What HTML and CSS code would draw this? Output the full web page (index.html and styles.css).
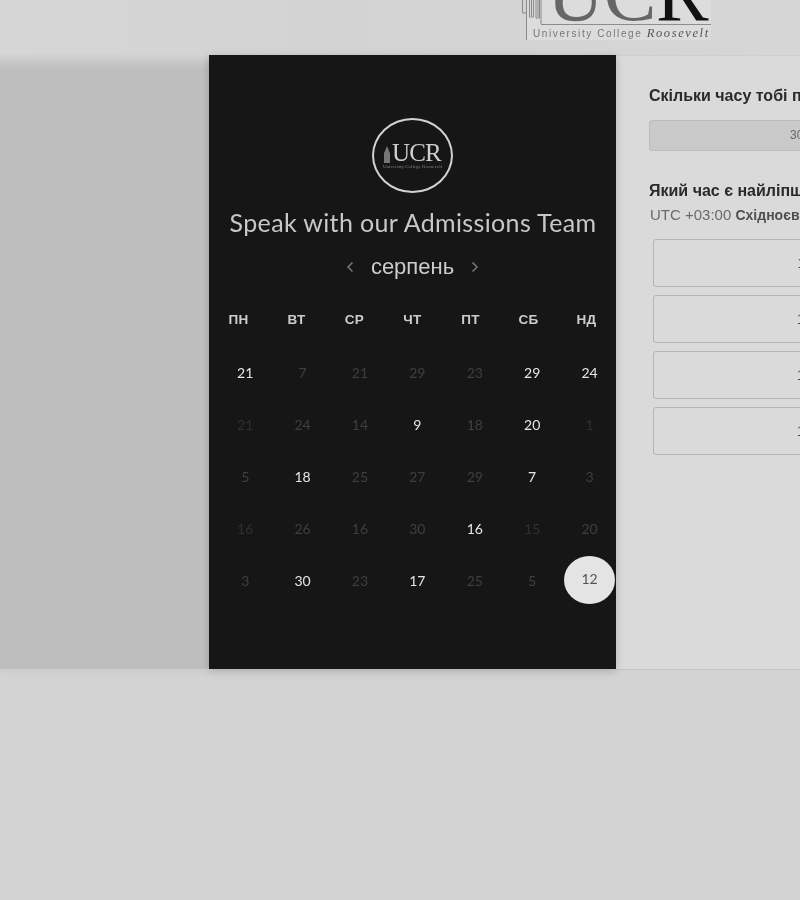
FILE: index.html
```html
<!DOCTYPE html>
<html lang="uk">
<head>
<meta charset="utf-8">
<title>Speak with our Admissions Team</title>
<link rel="stylesheet" href="styles.css">
</head>
<body>
<div class="page">
  <header class="top">
    <div class="logo">
      <svg class="logo-tower" width="26" height="41" viewBox="0 0 26 41" fill="none" stroke="#8a8a8a" stroke-width="1">
        <path d="M5.500 0V40"/>
        <path d="M1.500 0V13H5.500M8.500 0V17H12.500V0M15 0V18H18.500V0M20 0V24"/>
        <path d="M10.500 0V16M17 0V17"/>
      </svg>
      <div class="logo-body">
        <div class="logo-clip"><div class="logo-mark"><span class="soft">UC</span>R</div></div>
        <div class="logo-sub">University College <em>Roosevelt</em></div>
      </div>
    </div>
  </header>
  <main class="main">
    <div class="side"></div>
    <section class="dark">
      <div class="badge">
        <div class="badge-row">
          <svg width="6" height="17" viewBox="0 0 6 17" fill="#777"><path d="M0 17V7L1 5 3 0 5 5 6 7V17Z"/></svg>
          <span class="badge-name">UCR</span>
        </div>
        <div class="badge-sub">University College Roosevelt</div>
      </div>
      <h1 class="headline">Speak with our Admissions Team</h1>
      <div class="month">
        <svg class="chev" width="8" height="12" viewBox="0 0 8 12" fill="none" stroke="#777" stroke-width="1.500"><path d="M6.500 1.500 2 6l4.500 4.500"/></svg>
        <span class="month-name">серпень</span>
        <svg class="chev" width="8" height="12" viewBox="0 0 8 12" fill="none" stroke="#777" stroke-width="1.500"><path d="M1.500 1.500 6 6l-4.500 4.500"/></svg>
      </div>
      <div class="weekdays">
        <span>ПН</span><span>ВТ</span><span>СР</span><span>ЧТ</span><span>ПТ</span><span>СБ</span><span>НД</span>
      </div>
      <div class="days">
        <span class="on">21</span><span>7</span><span>21</span><span>29</span><span>23</span><span class="on">29</span><span class="on">24</span>
        <span class="dim">21</span><span>24</span><span>14</span><span class="on">9</span><span>18</span><span class="on">20</span><span class="dim">1</span>
        <span>5</span><span class="on">18</span><span>25</span><span>27</span><span>29</span><span class="on">7</span><span>3</span>
        <span class="dim">16</span><span>26</span><span>16</span><span>30</span><span class="on">16</span><span class="dim">15</span><span>20</span>
        <span>3</span><span class="on">30</span><span>23</span><span class="on">17</span><span>25</span><span>5</span><span class="sel"><b>12</b></span>
      </div>
    </section>
    <section class="panel">
      <h2 class="q">Скільки часу тобі потрібно?</h2>
      <div class="duration">30 хвилин</div>
      <h2 class="q q2">Який час є найліпшим?</h2>
      <p class="tz">UTC +03:00 <b>Східноєвропейський літній час</b></p>
      <div class="slots">
        <div class="slot">11:00</div>
        <div class="slot">12:00</div>
        <div class="slot">13:00</div>
        <div class="slot">14:00</div>
      </div>
    </section>
  </main>
</div>
</body>
</html>
```
FILE: styles.css
```css
* { box-sizing: border-box; }
html, body { margin: 0; padding: 0; height: 100%; overflow: hidden; background: #d3d3d3; }
.page {
  width: 800px; height: 900px; overflow: hidden;
  font-family: "Liberation Sans", Arial, sans-serif;
  filter: blur(0.35px);
  background: #d3d3d3;
}
.top {
  height: 55px; padding-left: 521px; overflow: hidden;
  background: linear-gradient(90deg, #d6d6d6, #d3d3d3 40%, #d6d6d6);
}
.logo { display: flex; width: 190px; height: 41px; }
.logo-tower { flex: none; margin-right: -21px; position: relative; z-index: 1; }
.logo-body { background: #dcdcdc; flex: 1; height: 40px; overflow: hidden; padding-left: 21px; }
.logo-clip { height: 25px; overflow: hidden; border-bottom: 1.500px solid #8c8c8c; margin-left: -6px; }
.logo-mark {
  font-family: "Liberation Serif", serif; font-size: 79px; line-height: 78px;
  margin-top: -45.500px; padding-left: 6px; color: #111; white-space: nowrap; letter-spacing: -.4px;
}
.soft { color: #666; }
.logo-sub {
  font-size: 10px; line-height: 14px; color: #777; letter-spacing: 1.600px;
  white-space: nowrap; margin: 1px 0 0 -14px;
}
.logo-sub em { font-family: "Liberation Serif", serif; color: #555; font-size: 12.500px; letter-spacing: 1.600px; }
.main { display: flex; height: 614px; width: 1100px; }
.side {
  width: 209px; flex: none;
  background: linear-gradient(#d2d2d2 0, #bebebe 14px);
  box-shadow: 0 3px 8px rgba(0,0,0,.04);
}
.dark {
  width: 407px; flex: none; background: #161616; padding-top: 63px;
  box-shadow: 0 2px 8px rgba(0,0,0,.2); position: relative;
}
.badge {
  width: 81px; height: 75px; margin: 0 auto 0 163px; border: 2.500px solid #d2d2d2; border-radius: 50%;
  display: flex; flex-direction: column; align-items: center; justify-content: center; padding-top: 1px;
}
.badge-row { display: flex; align-items: flex-end; gap: 2px; height: 20px; }
.badge-name { font-family: "Liberation Serif", serif; color: #cfcfcf; font-size: 25px; line-height: 21px; letter-spacing: -.8px; }
.badge-sub { font-family: "Liberation Serif", serif; font-size: 5px; color: #808080; white-space: nowrap; line-height: 6px; margin-top: 1px; }
.headline {
  margin: 14px 0 0; height: 30px; text-align: center; font-family: Lato, sans-serif; font-weight: 400;
  font-size: 25px; line-height: 30px; color: #c8c8c8; white-space: nowrap; letter-spacing: .36px; padding-left: 1px;
}
.month {
  display: flex; align-items: center; justify-content: center; gap: 17px; height: 28px; margin-top: 16px;
}
.month-name { font-size: 22px; line-height: 28px; color: #cccccc; }
.chev { flex: none; }
.weekdays {
  display: grid; grid-template-columns: repeat(7, 58px); margin-top: 21px; height: 44px; padding-left: .5px;
  font-size: 13.500px; font-weight: 700; color: #cccccc; text-align: center; line-height: 14px; padding-top: 11px; letter-spacing: .3px;
}
.days {
  display: grid; grid-template-columns: repeat(7, 57.400px); grid-auto-rows: 52px; margin: 0 0 0 7.500px; width: 402px;
  font-family: Lato, sans-serif; font-size: 14px; color: #3f3f3f; text-align: center;
}
.days span { display: flex; align-items: center; justify-content: center; }
.days .on { color: #e6e6e6; }
.days .dim { color: #303030; }
.days .sel b {
  display: flex; align-items: center; justify-content: center; flex: none; padding-bottom: 3px;
  width: 51px; height: 48px; border-radius: 50%; background: #e4e4e4; color: #555; font-weight: 400;
}
.panel {
  width: 404px; flex: none; background: #dadada; padding: 31px 0 0 33px; border-top: 1px solid #cfcfcf;
  box-shadow: 0 1px 1px rgba(0,0,0,.06);
}
.q { margin: 0; font-size: 16px; line-height: 17px; font-weight: 700; color: #2a2a2a; white-space: nowrap; }
.duration {
  width: 338px; height: 31px; margin-top: 16px; background: #c9c9c9; border: 1px solid #bcbcbc; border-radius: 3px;
  font-size: 12px; line-height: 29px; color: #666; text-align: center;
}
.q2 { margin-top: 31px; }
.tz { margin: 8px 0 0 1px; font-size: 15px; line-height: 16px; color: #6a6a6a; white-space: nowrap; }
.tz b { color: #4f4f4f; font-size: 14px; }
.slots { display: flex; flex-direction: column; gap: 8px; margin: 16px 0 0 4px; width: 323px; }
.slot {
  height: 48px; border: 1px solid #b4b4b4; border-radius: 3px; text-align: center;
  font-size: 14px; line-height: 46px; color: #444;
}
```
